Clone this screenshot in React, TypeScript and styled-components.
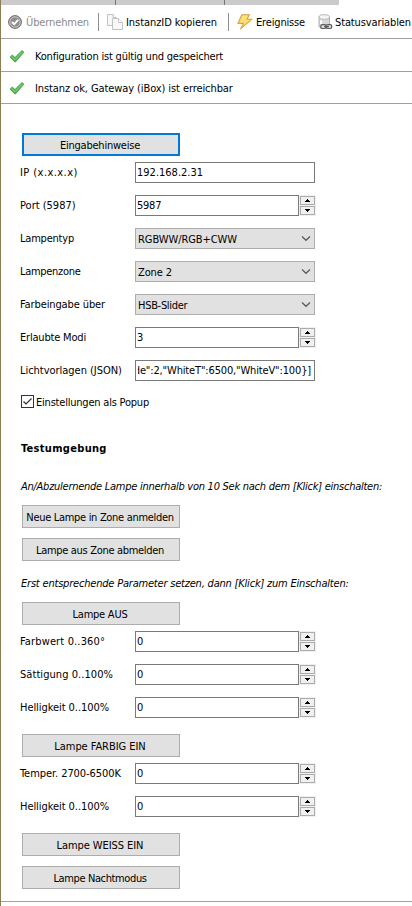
import React from 'react';
import styled, { createGlobalStyle } from 'styled-components';

const GlobalStyle = createGlobalStyle`
  * { box-sizing: border-box; }
  body { margin: 0; background: #fff; overflow: hidden; }
  button, input { font: inherit; color: inherit; }
`;

const Window = styled.div`
  height: 906px;
  border-left: 1px solid #8f7d52;
  background: #fff;
  color: #000;
  font: 11px/13px "DejaVu Sans Condensed", "DejaVu Sans", sans-serif;
  font-stretch: condensed;
  white-space: nowrap;
  overflow: hidden;
`;

const Text = styled.span<{ $track?: number; $muted?: boolean }>`
  letter-spacing: ${p => p.$track ?? 0}px;
  color: ${p => (p.$muted ? '#8b8b8b' : 'inherit')};
`;

const TabStrip = styled.div`
  display: flex;
  width: 338px;
  height: 5px;
  background: #cbcbcb;
`;

const Tab = styled.div<{ $width: number }>`
  width: ${p => p.$width}px;
  border-right: 1px solid #777;
`;

const Toolbar = styled.div`
  display: flex;
  align-items: center;
  height: 34px;
  border-bottom: 1px solid #a0a0a0;
  padding-left: 7px;
`;

const Tool = styled.div<{ $width: number; $gap: number }>`
  display: flex;
  align-items: center;
  flex: none;
  width: ${p => p.$width}px;
  gap: ${p => p.$gap}px;
  padding-top: 1px;
  svg { flex: none; }
`;

const Divider = styled.div<{ $after: number }>`
  flex: none;
  width: 1px;
  height: 18px;
  margin-right: ${p => p.$after}px;
  background: #8e8e8e;
`;

const Status = styled.div<{ $height: number; $top: number }>`
  display: flex;
  align-items: flex-start;
  gap: 10px;
  height: ${p => p.$height}px;
  padding: ${p => p.$top}px 0 0 8px;
  border-bottom: 1px solid #a0a0a0;
`;

const Form = styled.main`
  height: 798px;
  padding: 29px 0 0 19px;
  border-bottom: 1px solid #a0a0a0;
`;

const Button = styled.button<{ $gap: number; $focused?: boolean }>`
  display: flex;
  justify-content: center;
  width: 158px;
  height: 23px;
  margin: 0 0 ${p => p.$gap}px 2px;
  padding: ${p => (p.$focused ? 4 : 5)}px 2px 0 0;
  border: ${p => (p.$focused ? '2px solid #0078d7' : '1px solid #adadad')};
  background: #e1e1e1;
`;

const Row = styled.div<{ $gap?: number }>`
  display: grid;
  grid-template-columns: 115px 181px;
  align-items: center;
  height: 21px;
  margin-bottom: ${p => p.$gap ?? 12}px;
`;

const Field = styled.div`
  display: flex;
  width: 180px;
  height: 21px;
  padding: 3px 2px 0 1px;
  border: 1px solid #7a7a7a;
  background: #fff;
`;

const FieldClip = styled.div<{ $end?: boolean }>`
  display: flex;
  justify-content: ${p => (p.$end ? 'flex-end' : 'flex-start')};
  width: 100%;
  padding-right: ${p => (p.$end ? 1 : 0)}px;
  margin-left: ${p => (p.$end ? 1 : 0)}px;
  overflow: hidden;
`;

const NumberBox = styled.div`
  display: flex;
  ${Field} { width: 164px; }
`;

const Spinner = styled.div`
  display: flex;
  flex-direction: column;
  gap: 1px;
  width: 17px;
  padding: 1px;
  background: #f0f0f0;
`;

const SpinButton = styled.div`
  display: flex;
  align-items: center;
  justify-content: center;
  height: 9px;
  border: 1px solid #acacac;
`;

const SelectBox = styled.div`
  display: flex;
  justify-content: space-between;
  width: 180px;
  height: 21px;
  padding: 4px 3px 0 2px;
  border: 1px solid #adadad;
  background: #e1e1e1;
`;

const ChevronSlot = styled.span`
  display: flex;
  padding-top: 2px;
`;

const CheckRow = styled.div`
  display: flex;
  gap: 2px;
  height: 13px;
  margin: 14px 0 34px 1px;
  ${Text} { padding-top: 1px; }
`;

const Heading = styled.h2`
  margin: 0 0 25px 1px;
  font-size: 11px;
  line-height: 13px;
  letter-spacing: 0.31px;
`;

const Note = styled.p<{ $gap: number; $track: number }>`
  margin: 0 0 ${p => p.$gap}px 1px;
  font-style: italic;
  letter-spacing: ${p => p.$track}px;
`;

const ApplyIcon = () => (
  <svg width="14" height="14" viewBox="0 0 14 14">
    <circle cx="7" cy="7" r="6.4" fill="#8c8c8c" stroke="#6e6e6e" />
    <circle cx="7" cy="7" r="5.2" fill="#8e8e8e" stroke="#cfcfcf" strokeWidth=".9" />
    <path d="M3.900 7 6.200 9.200 10.200 4.900" fill="none" stroke="#fff" strokeWidth="1.900" />
  </svg>
);

const CopyIcon = () => (
  <svg width="16" height="16" viewBox="0 0 16 16" fill="#f8f8f8" stroke="#c2c2c2">
    <path d="M.5.5h5.500l3 3v8H.5z" />
    <path d="M6 .5v3h3" fill="#fff" />
    <path d="M5.500 4.500h6l4 4v7h-10z" />
    <path d="M11.500 4.500v4h4" fill="#fff" />
  </svg>
);

const BoltIcon = () => (
  <svg width="16" height="16" viewBox="0 0 16 16">
    <path d="M4.800.7h7.700L10.200 5.200h5L3.500 15l2.800-5.500H.8z" fill="#f9c941" stroke="#d4a047" strokeLinejoin="round" />
    <path d="M5.500 1.600h5.200L8.500 6h4.300L6.500 11l1.300-2.500H2.500z" fill="#ffe07c" />
  </svg>
);

const VariablesIcon = () => (
  <svg width="15" height="16" viewBox="0 0 15 16">
    <path d="M1 3v9c0 1.700 2 2.500 5 2.500s5.500-.8 5.500-2.500V3z" fill="#d8d8d8" stroke="#b0b0b0" />
    <ellipse cx="6.250" cy="3" rx="5.250" ry="2.300" fill="#f4f4f4" stroke="#b8b8b8" />
    <path d="M3 6.500v4" stroke="#fff" strokeWidth="2" />
    <g fill="#ddd" stroke="#5c5c5c" strokeWidth="1.200">
      <rect x="2.700" y="10.700" width="5.500" height="3.800" rx="1.700" />
      <rect x="8.300" y="10.700" width="5.500" height="3.800" rx="1.700" />
      <path d="M6 12.600h5" />
    </g>
  </svg>
);

const OkIcon = () => (
  <svg width="16" height="13" viewBox="0 0 16 13">
    <path d="M1 7.200 3.300 5 6 7.500 13 .6l1.900 1.600L6.200 12.200z" fill="#58b558" stroke="#3f9a49" strokeWidth=".8" strokeLinejoin="round" />
    <path d="M2.500 6.700 6 9.600 13.500 1.900" fill="none" stroke="#83d67c" strokeWidth="1" />
  </svg>
);

const Chevron = () => (
  <svg width="10" height="7" viewBox="0 0 10 7">
    <path d="M1 1.500 5 5.300 9 1.500" fill="none" stroke="#5a5a5a" strokeWidth="1.200" />
  </svg>
);

const Arrow = ({ down }: { down?: boolean }) => (
  <svg width="5" height="3" viewBox="0 0 5 3" shapeRendering="crispEdges">
    <path d={down ? 'M0 0h5v1h-1v1h-1v1h-1v-1h-1v-1h-1z' : 'M2 0h1v1h1v1h1v1h-5v-1h1v-1h1z'} fill="#000" />
  </svg>
);

interface EntryProps {
  label: string;
  track: number;
  value: string;
  valueTrack?: number;
  gap?: number;
}

const TextEntry = ({ label, track, value, valueTrack, gap, end }: EntryProps & { end?: boolean }) => (
  <Row $gap={gap}>
    <Text $track={track}>{label}</Text>
    <Field>
      <FieldClip $end={end}><Text $track={valueTrack}>{value}</Text></FieldClip>
    </Field>
  </Row>
);

const NumberEntry = ({ label, track, value, valueTrack, gap }: EntryProps) => (
  <Row $gap={gap}>
    <Text $track={track}>{label}</Text>
    <NumberBox>
      <Field><Text $track={valueTrack}>{value}</Text></Field>
      <Spinner>
        <SpinButton><Arrow /></SpinButton>
        <SpinButton><Arrow down /></SpinButton>
      </Spinner>
    </NumberBox>
  </Row>
);

const SelectEntry = ({ label, track, value, valueTrack }: EntryProps) => (
  <Row>
    <Text $track={track}>{label}</Text>
    <SelectBox>
      <Text $track={valueTrack}>{value}</Text>
      <ChevronSlot><Chevron /></ChevronSlot>
    </SelectBox>
  </Row>
);

export default function App() {
  return (
    <>
      <GlobalStyle />
      <Window>
        <TabStrip><Tab $width={115} /><Tab $width={109} /></TabStrip>
        <Toolbar>
          <Tool $width={90} $gap={4}><ApplyIcon /><Text $track={-0.11} $muted>Übernehmen</Text></Tool>
          <Divider $after={8} />
          <Tool $width={121} $gap={3}><CopyIcon /><Text $track={-0.06}>InstanzID kopieren</Text></Tool>
          <Divider $after={8} />
          <Tool $width={81} $gap={3}><BoltIcon /><Text $track={-0.16}>Ereignisse</Text></Tool>
          <Tool $width={94} $gap={2}><VariablesIcon /><Text $track={-0.12}>Statusvariablen</Text></Tool>
        </Toolbar>
        <Status $height={33} $top={11}><OkIcon /><Text $track={-0.2}>Konfiguration ist gültig und gespeichert</Text></Status>
        <Status $height={32} $top={10}><OkIcon /><Text $track={-0.09}>Instanz ok, Gateway (iBox) ist erreichbar</Text></Status>
        <Form>
          <Button $focused $gap={6}><Text $track={-0.23}>Eingabehinweise</Text></Button>
          <TextEntry label="IP (x.x.x.x)" track={0.43} value="192.168.2.31" />
          <NumberEntry label="Port (5987)" track={0} value="5987" valueTrack={-0.25} />
          <SelectEntry label="Lampentyp" track={-0.21} value="RGBWW/RGB+CWW" valueTrack={-0.07} />
          <SelectEntry label="Lampenzone" track={-0.3} value="Zone 2" valueTrack={-0.11} />
          <SelectEntry label="Farbeingabe über" track={-0.11} value="HSB-Slider" valueTrack={-0.3} />
          <NumberEntry label="Erlaubte Modi" track={-0.19} value="3" />
          <TextEntry label="Lichtvorlagen (JSON)" track={-0.03} value={'de":2,"WhiteT":6500,"WhiteV":100}]'} valueTrack={-0.15} gap={0} end />
          <CheckRow>
            <svg width="13" height="13" viewBox="0 0 13 13">
              <rect x=".5" y=".5" width="12" height="12" fill="#fff" stroke="#333" />
              <path d="M2.500 6.500 5 9 10.500 3.500" fill="none" stroke="#333" strokeWidth="1.200" />
            </svg>
            <Text $track={-0.21}>Einstellungen als Popup</Text>
          </CheckRow>
          <Heading>Testumgebung</Heading>
          <Note $gap={12} $track={-0.26}>An/Abzulernende Lampe innerhalb von 10 Sek nach dem [Klick] einschalten:</Note>
          <Button $gap={10}><Text $track={-0.31}>Neue Lampe in Zone anmelden</Text></Button>
          <Button $gap={16}><Text $track={-0.31}>Lampe aus Zone abmelden</Text></Button>
          <Note $gap={12} $track={-0.2}>Erst entsprechende Parameter setzen, dann [Klick] zum Einschalten:</Note>
          <Button $gap={6}><Text $track={-0.23}>Lampe AUS</Text></Button>
          <NumberEntry label="Farbwert 0..360°" track={0.14} value="0" />
          <NumberEntry label="Sättigung 0..100%" track={0.06} value="0" />
          <NumberEntry label="Helligkeit 0..100%" track={-0.06} value="0" gap={16} />
          <Button $gap={6}><Text $track={-0.05}>Lampe FARBIG EIN</Text></Button>
          <NumberEntry label="Temper. 2700-6500K" track={-0.06} value="0" />
          <NumberEntry label="Helligkeit 0..100%" track={-0.06} value="0" gap={16} />
          <Button $gap={10}><Text $track={-0.08}>Lampe WEISS EIN</Text></Button>
          <Button $gap={0}><Text $track={-0.38}>Lampe Nachtmodus</Text></Button>
        </Form>
      </Window>
    </>
  );
}
